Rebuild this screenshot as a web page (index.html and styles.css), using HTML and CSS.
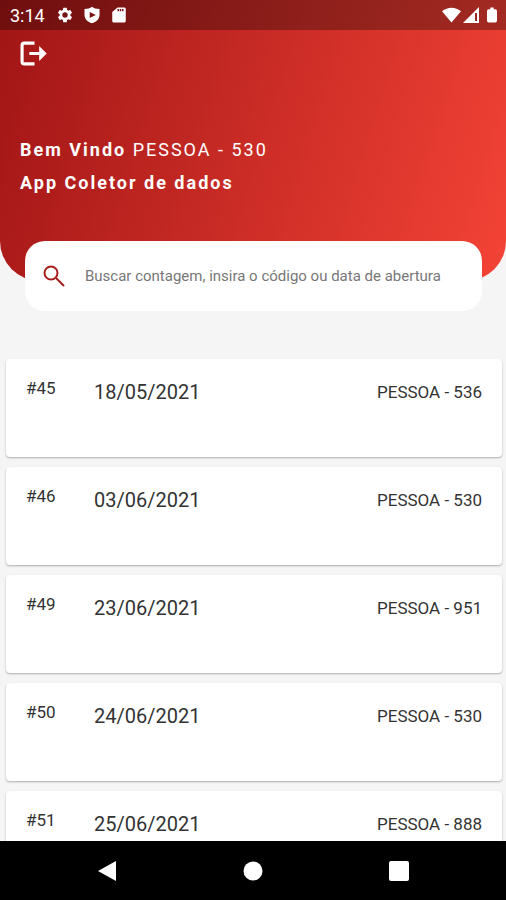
FILE: index.html
```html
<!DOCTYPE html>
<html lang="pt-BR">
<head>
    <meta charset="UTF-8">
    <meta name="viewport" content="width=device-width, initial-scale=1.0">
    <title>App Coletor de dados</title>
    <link rel="stylesheet" href="styles.css">
</head>
<body>
    <header class="header">
        <div class="status-bar">
            <span class="clock">3:14</span>
            <svg class="status-icon" viewBox="0 0 24 24"><path d="M19.14 12.94c.04-.3.06-.61.06-.94 0-.32-.02-.64-.07-.94l2.03-1.58a.49.49 0 0 0 .12-.61l-1.92-3.32a.49.49 0 0 0-.59-.22l-2.39.96c-.5-.38-1.03-.7-1.62-.94l-.36-2.54a.48.48 0 0 0-.48-.41h-3.84a.48.48 0 0 0-.47.41l-.36 2.54c-.59.24-1.13.57-1.62.94l-2.39-.96a.48.48 0 0 0-.59.22L2.74 8.87a.48.48 0 0 0 .12.61l2.03 1.58c-.05.3-.09.63-.09.94s.02.64.07.94l-2.03 1.58a.49.49 0 0 0-.12.61l1.92 3.32c.12.22.37.29.59.22l2.39-.96c.5.38 1.03.7 1.62.94l.36 2.54c.05.24.24.41.48.41h3.84c.24 0 .44-.17.47-.41l.36-2.54c.59-.24 1.13-.56 1.62-.94l2.39.96c.22.08.47 0 .59-.22l1.92-3.32a.48.48 0 0 0-.12-.61zM12 15.6A3.6 3.6 0 1 1 12 8.400a3.600 3.600 0 0 1 0 7.200z"/></svg>
            <svg class="status-icon" viewBox="0 0 24 24"><path fill-rule="evenodd" d="M12 1C9.500 3 6.500 4 2 4v8c0 5.500 4.500 9.500 10 11 5.500-1.500 10-5.500 10-11V4c-4.500 0-7.500-1-10-3zM9 8l8 4-8 4z"/></svg>
            <svg class="status-icon" viewBox="0 0 24 24"><path d="M19 2h-9L3 8v12c0 1.100.9 2 2 2h14c1.100 0 2-.9 2-2V4c0-1.100-.9-2-2-2zm-7 5h-2V4h2zm3 0h-2V4h2zm3 0h-2V4h2z"/></svg>
            <div class="signal">
                <svg class="wifi-icon" viewBox="0 0 20 16"><path d="M10 16 0 4c6-5 14-5 20 0z"/></svg>
                <svg class="cell-icon" viewBox="0 0 16 16"><path fill-rule="evenodd" d="M16 0v16H0zM12 6h2v8h-2z"/></svg>
                <svg class="battery-icon" viewBox="0 0 12 18"><path d="M4 0h4v2h2q2 0 2 2v12q0 2-2 2H2q-2 0-2-2V4q0-2 2-2h2z"/></svg>
            </div>
        </div>

        <button type="button" class="logout-btn" aria-label="Sair">
            <svg viewBox="0 0 26 24"><path d="M14 2H4Q2 2 2 4v16q0 2 2 2h10M9 12h13"/><path class="arrow-head" d="M19 6l6 6-6 6v-4l2-2-2-2z"/></svg>
        </button>

        <div class="welcome">
            <p><strong>Bem Vindo</strong> PESSOA - 530</p>
            <p><strong>App Coletor de dados</strong></p>
        </div>
    </header>

    <form class="search" role="search">
        <label for="searchInput" aria-label="Buscar contagem">
            <svg class="search-icon" viewBox="0 0 22 22"><circle cx="8" cy="8" r="6.500"/><path d="m13 13 8 8"/></svg>
        </label>
        <input type="text" id="searchInput" class="search-input" placeholder="Buscar contagem, insira o código ou data de abertura" autocomplete="off">
    </form>

    <main class="list">
        <article class="card">
            <span class="card-id">#45</span>
            <span class="card-date">18/05/2021</span>
            <span class="card-person">PESSOA - 536</span>
        </article>
        <article class="card">
            <span class="card-id">#46</span>
            <span class="card-date">03/06/2021</span>
            <span class="card-person">PESSOA - 530</span>
        </article>
        <article class="card">
            <span class="card-id">#49</span>
            <span class="card-date">23/06/2021</span>
            <span class="card-person">PESSOA - 951</span>
        </article>
        <article class="card">
            <span class="card-id">#50</span>
            <span class="card-date">24/06/2021</span>
            <span class="card-person">PESSOA - 530</span>
        </article>
        <article class="card">
            <span class="card-id">#51</span>
            <span class="card-date">25/06/2021</span>
            <span class="card-person">PESSOA - 888</span>
        </article>
    </main>

    <nav class="nav-bar">
        <button type="button" aria-label="Voltar"><svg viewBox="0 0 20 20"><path d="M19 0v20L1 10z"/></svg></button>
        <button type="button" aria-label="Início"><svg viewBox="0 0 20 20"><circle cx="10" cy="10" r="9.500"/></svg></button>
        <button type="button" aria-label="Recentes"><svg viewBox="0 0 20 20"><rect width="20" height="20" rx="2"/></svg></button>
    </nav>
</body>
</html>
```

FILE: styles.css
```css
* {
    margin: 0;
    padding: 0;
    box-sizing: border-box;
}

body {
    font-family: Roboto, 'Liberation Sans', sans-serif;
    background: #f5f5f5;
    color: #333;
    height: 100vh;
    display: flex;
    flex-direction: column;
    overflow: hidden;
}

button {
    background: none;
    border: none;
    cursor: pointer;
}

svg {
    display: block;
}

.header {
    flex-shrink: 0;
    color: white;
    background: linear-gradient(107deg, #a01515 0%, #f44336 100%);
    border-radius: 0 0 40px 40px;
    padding-bottom: 82px;
}

.status-bar {
    display: flex;
    align-items: center;
    gap: 9px;
    height: 30px;
    padding: 0 9px 0 10px;
    background: rgba(0, 0, 0, 0.3);
    fill: white;
}

.clock {
    font-size: 18px;
    margin-right: 2px;
}

.status-icon {
    width: 18px;
    height: 18px;
}

.signal {
    display: flex;
    align-items: center;
    gap: 2px;
    margin-left: auto;
}

.wifi-icon {
    width: 19px;
    height: 16px;
}

.cell-icon {
    width: 16px;
    height: 16px;
}

.battery-icon {
    width: 10px;
    height: 16px;
    margin-left: 6px;
}

.logout-btn {
    display: block;
    padding: 11px 20px;
}

.logout-btn svg {
    width: 27px;
    height: 25px;
    fill: none;
    stroke: white;
    stroke-width: 3;
}

.logout-btn .arrow-head {
    fill: white;
    stroke-width: 1;
}

.welcome {
    padding: 56px 20px 0;
    font-size: 18px;
    line-height: 33px;
    letter-spacing: 2px;
}

.search {
    flex-shrink: 0;
    display: flex;
    align-items: center;
    gap: 20px;
    height: 70px;
    margin: -40px 24px 0 25px;
    padding: 0 18px;
    background: white;
    border-radius: 20px;
    z-index: 1;
}

.search-icon {
    width: 22px;
    height: 22px;
    fill: none;
    stroke: #a81c1c;
    stroke-width: 2;
}

.search-input {
    flex: 1;
    min-width: 0;
    border: none;
    outline: none;
    background: none;
    font-family: inherit;
    font-size: 15px;
    color: #333;
}

.search-input::placeholder {
    color: #777;
}

.list {
    flex: 1;
    min-height: 0;
    display: flex;
    flex-direction: column;
    gap: 10px;
    margin-top: 48px;
    padding: 0 4px 0 6px;
    overflow: hidden;
}

.card {
    flex: 0 0 98px;
    display: flex;
    align-items: flex-start;
    padding: 19px 20px;
    background: white;
    border-radius: 4px;
    box-shadow: 0 1px 2px rgba(0, 0, 0, 0.3);
}

.card-id {
    width: 68px;
    font-size: 17px;
    line-height: 20px;
}

.card-date {
    font-size: 20px;
    line-height: 28px;
}

.card-person {
    margin-left: auto;
    font-size: 17px;
    line-height: 28px;
}

.nav-bar {
    flex-shrink: 0;
    display: flex;
    justify-content: center;
    gap: 126px;
    height: 59px;
    background: black;
}

.nav-bar svg {
    width: 20px;
    height: 20px;
    fill: white;
}
```
